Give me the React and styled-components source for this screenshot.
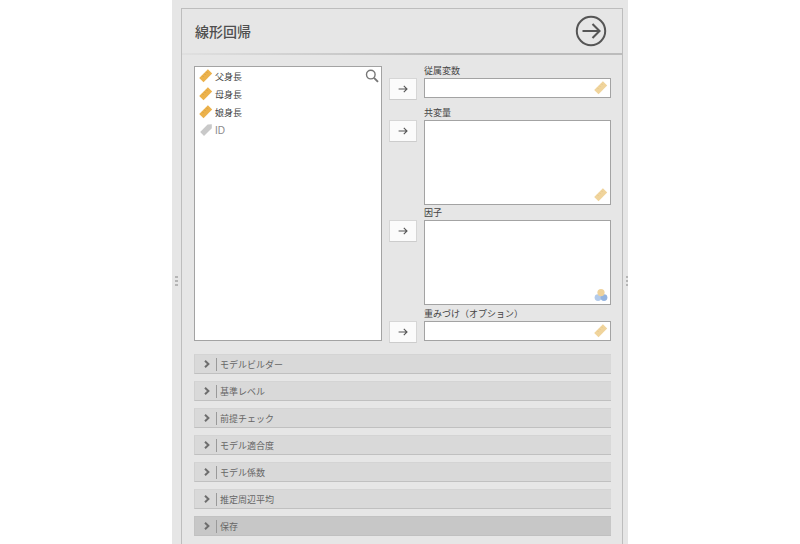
import styled, { createGlobalStyle } from "styled-components";

const GlobalStyle = createGlobalStyle`
  html, body {
    margin: 0;
    height: 544px;
    overflow: hidden;
    background: #ffffff;
    font-family: "Liberation Sans", "Noto Sans CJK JP", sans-serif;
  }
`;

const sources = [
  { name: "父身長", kind: "scale" },
  { name: "母身長", kind: "scale" },
  { name: "娘身長", kind: "scale" },
  { name: "ID", kind: "id" },
];

const targets = [
  { label: "従属変数", height: 20, gap: 0, icon: "ruler" },
  { label: "共変量", height: 85, gap: 9, icon: "ruler" },
  { label: "因子", height: 85, gap: 2, icon: "factor" },
  { label: "重みづけ（オプション）", height: 20, gap: 3, icon: "ruler" },
];

const sections = [
  "モデルビルダー",
  "基準レベル",
  "前提チェック",
  "モデル適合度",
  "モデル係数",
  "推定周辺平均",
  "保存",
];

function RulerIcon({ color = "#ecb24c", notch = "#d09a3e" }) {
  return (
    <svg width="14" height="14" viewBox="0 0 14 14">
      <path d="M8.9 0.2 13.2 4.5 4.5 13.2 0.2 8.9Z" fill={color} />
      <path d="M7.4 2.8 8.7 4.1M5.4 4.8 6.7 6.1M3.4 6.8 4.7 8.1" stroke={notch} strokeWidth="0.8" />
    </svg>
  );
}

function PencilIcon() {
  return (
    <svg width="14" height="14" viewBox="0 0 14 14">
      <path d="M8.6 1.4 12.8 1.2 12.8 5.2 5 13 1.2 9Z" fill="#c9c9c9" />
    </svg>
  );
}

function FactorIcon() {
  return (
    <svg width="14" height="14" viewBox="0 0 14 14">
      <circle cx="4" cy="9.6" r="3.4" fill="#b4cbea" />
      <circle cx="10" cy="9.6" r="3.4" fill="#94b4e0" />
      <circle cx="7" cy="4.6" r="3.6" fill="#eed29c" />
    </svg>
  );
}

function SearchIcon() {
  return (
    <svg width="14" height="14" viewBox="0 0 14 14" fill="none" stroke="#777" strokeWidth="1.4">
      <circle cx="5.8" cy="5.6" r="4.3" />
      <path d="M9 8.8 13 12.8" strokeWidth="1.9" />
    </svg>
  );
}

function ArrowIcon() {
  return (
    <svg width="10" height="10" viewBox="0 0 10 10" fill="none" stroke="#555" strokeWidth="1.1">
      <path d="M0.6 5H9M5.8 1.8 9 5 5.8 8.2" />
    </svg>
  );
}

function RunIcon() {
  return (
    <svg width="32" height="32" viewBox="0 0 32 32" fill="none" stroke="#555" strokeWidth="2">
      <circle cx="16" cy="16" r="14.2" />
      <path d="M7.5 16H24.5M17.5 9 24.5 16 17.5 23" strokeWidth="2.1" />
    </svg>
  );
}

function Chevron() {
  return (
    <svg width="6" height="8" viewBox="0 0 6 8" fill="none" stroke="#6e6e6e" strokeWidth="2">
      <path d="M1 0.8 4.4 4 1 7.2" />
    </svg>
  );
}

function App() {
  return (
    <>
      <GlobalStyle />
      <Page>
        <Panel>
          <Handle $side="left" />
          <Handle $side="right" />
          <Frame>
            <TitleBar>
              <Title>線形回帰</Title>
              <RunButton>
                <RunIcon />
              </RunButton>
            </TitleBar>
            <Body>
              <Supplier>
                <SupplierSearch>
                  <SearchIcon />
                </SupplierSearch>
                {sources.map((item) => (
                  <SourceRow key={item.name} $muted={item.kind === "id"}>
                    {item.kind === "id" ? <PencilIcon /> : <RulerIcon />}
                    <span>{item.name}</span>
                  </SourceRow>
                ))}
              </Supplier>
              <Targets>
                {targets.map((target) => (
                  <Target key={target.label} $gap={target.gap}>
                    <TargetLabel>{target.label}</TargetLabel>
                    <MoveButton>
                      <ArrowIcon />
                    </MoveButton>
                    <TargetBox $height={target.height}>
                      <TargetIcon>
                        {target.icon === "factor" ? (
                          <FactorIcon />
                        ) : (
                          <RulerIcon color="#f0d49c" notch="#e3c486" />
                        )}
                      </TargetIcon>
                    </TargetBox>
                  </Target>
                ))}
              </Targets>
            </Body>
            <Sections>
              {sections.map((name) => (
                <Section key={name} $active={name === "保存"}>
                  <ChevronSlot>
                    <Chevron />
                  </ChevronSlot>
                  <SectionName>{name}</SectionName>
                </Section>
              ))}
            </Sections>
          </Frame>
        </Panel>
      </Page>
    </>
  );
}

const Page = styled.div`
  width: 800px;
  height: 544px;
  overflow: hidden;
  display: flex;
  justify-content: center;
`;

const Panel = styled.div`
  position: relative;
  box-sizing: border-box;
  width: 456px;
  height: 544px;
  padding: 8px 5px 0 9px;
  background: #e6e6e6;
`;

const Handle = styled.div`
  position: absolute;
  top: 276px;
  ${(p) => (p.$side === "left" ? "left: 3px;" : "right: 0;")}
  width: ${(p) => (p.$side === "left" ? 3 : 2)}px;
  height: 10px;
  background: repeating-linear-gradient(#b5b5b5 0 2px, transparent 2px 4px);
`;

const Frame = styled.div`
  box-sizing: border-box;
  height: 560px;
  border: 1px solid #bdbdbd;
  border-bottom: none;
`;

const TitleBar = styled.div`
  box-sizing: border-box;
  height: 46px;
  display: flex;
  align-items: center;
  justify-content: space-between;
  padding: 0 15px 0 13px;
  border-bottom: 2px solid #c4c4c4;
  border-image: linear-gradient(90deg, #e0e0e0, #bcbcbc 60%) 1;
`;

const Title = styled.h1`
  margin: 0;
  font-size: 14px;
  font-weight: 500;
  color: #4f4f4f;
`;

const RunButton = styled.div`
  display: flex;
`;

const Body = styled.div`
  display: flex;
  gap: 7px;
  padding: 11px 0 0 12px;
`;

const Supplier = styled.div`
  position: relative;
  box-sizing: border-box;
  width: 188px;
  height: 275px;
  background: #fff;
  border: 1px solid #a3a3a3;
  padding: 0 0 0 4px;
`;

const SupplierSearch = styled.div`
  position: absolute;
  top: 2px;
  right: 2px;
  display: flex;
`;

const SourceRow = styled.div`
  display: flex;
  align-items: center;
  gap: 2px;
  height: 18px;
  font-size: ${(p) => (p.$muted ? 10 : 9)}px;
  color: ${(p) => (p.$muted ? "#8a8a8a" : "#444")};
`;

const Targets = styled.div`
  display: flex;
  flex-direction: column;
  margin-top: -1px;
`;

const Target = styled.div`
  display: grid;
  grid-template-columns: 28px 187px;
  grid-template-rows: 13px auto;
  column-gap: 7px;
  margin-top: ${(p) => p.$gap}px;
`;

const TargetLabel = styled.div`
  grid-column: 2;
  font-size: 9px;
  line-height: 12px;
  color: #444;
  white-space: nowrap;
`;

const MoveButton = styled.div`
  grid-column: 1;
  box-sizing: border-box;
  width: 28px;
  height: 22px;
  margin-bottom: -2px;
  display: flex;
  align-items: center;
  justify-content: center;
  background: #fbfbfb;
  border: 1px solid #d6d6d6;
  border-bottom-color: #cccccc;
`;

const TargetBox = styled.div`
  grid-column: 2;
  position: relative;
  box-sizing: border-box;
  height: ${(p) => p.$height}px;
  background: #fff;
  border: 1px solid #a3a3a3;
`;

const TargetIcon = styled.div`
  position: absolute;
  right: 2px;
  bottom: 2px;
  display: flex;
`;

const Sections = styled.div`
  display: flex;
  flex-direction: column;
  gap: 7px;
  padding: 13px 0 0 12px;
`;

const Section = styled.div`
  box-sizing: border-box;
  width: 417px;
  height: 20px;
  display: flex;
  align-items: center;
  background: ${(p) => (p.$active ? "#c7c7c7" : "#d9d9d9")};
  border-bottom: 1px solid #c0c0c0;
  border-top: 1px solid ${(p) => (p.$active ? "#c2c2c2" : "#d4d4d4")};
  border-left: 1px solid ${(p) => (p.$active ? "#c2c2c2" : "#d0d0d0")};
`;

const ChevronSlot = styled.div`
  width: 22px;
  height: 13px;
  box-sizing: border-box;
  display: flex;
  align-items: center;
  padding-left: 9px;
  border-right: 1px solid #9a9a9a;
`;

const SectionName = styled.span`
  margin-left: 3px;
  font-size: 9px;
  color: #666;
`;

export default App;
